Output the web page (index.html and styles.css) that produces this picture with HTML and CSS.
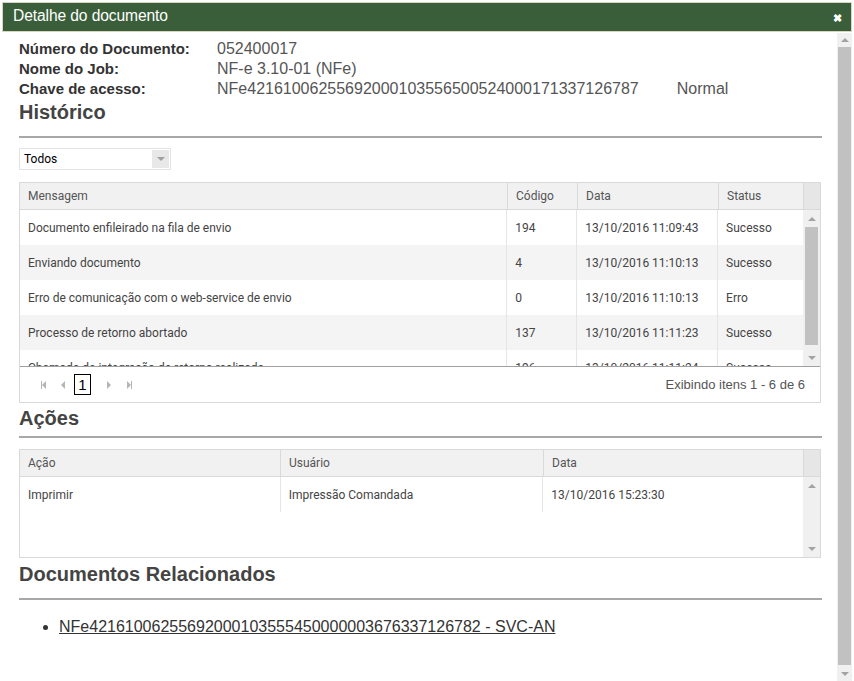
FILE: index.html
```html
<!DOCTYPE html>
<html lang="pt-BR">
<head>
    <meta charset="UTF-8">
    <title>Detalhe do documento</title>
    <link rel="stylesheet" href="styles.css">
</head>
<body>
    <div class="window">
        <div class="titlebar">
            <span class="title">Detalhe do documento</span>
            <span class="close">&#10006;</span>
        </div>
        <div class="window-body">
            <div class="content">
                <table class="info">
                    <tr><td class="label">Número do Documento:</td><td class="value">052400017</td><td></td></tr>
                    <tr><td class="label">Nome do Job:</td><td class="value">NF-e 3.10-01 (NFe)</td><td></td></tr>
                    <tr><td class="label">Chave de acesso:</td><td class="value">NFe42161006255692000103556500524000171337126787</td><td class="value extra">Normal</td></tr>
                </table>

                <h2 class="section first">Histórico</h2>
                <div class="dropdown">
                    <span class="dropdown-text">Todos</span>
                    <span class="dropdown-btn"><span class="arrow-down"></span></span>
                </div>

                <div class="grid hist">
                    <div class="grid-head">
                        <div class="hc c-msg">Mensagem</div>
                        <div class="hc c-cod">Código</div>
                        <div class="hc c-data">Data</div>
                        <div class="hc c-status">Status</div>
                        <div class="hc c-sb"></div>
                    </div>
                    <div class="grid-content">
                        <div class="rows">
                            <div class="row"><div class="c-msg">Documento enfileirado na fila de envio</div><div class="c-cod">194</div><div class="c-data">13/10/2016 11:09:43</div><div class="c-status">Sucesso</div></div>
                            <div class="row alt"><div class="c-msg">Enviando documento</div><div class="c-cod">4</div><div class="c-data">13/10/2016 11:10:13</div><div class="c-status">Sucesso</div></div>
                            <div class="row"><div class="c-msg">Erro de comunicação com o web-service de envio</div><div class="c-cod">0</div><div class="c-data">13/10/2016 11:10:13</div><div class="c-status">Erro</div></div>
                            <div class="row alt"><div class="c-msg">Processo de retorno abortado</div><div class="c-cod">137</div><div class="c-data">13/10/2016 11:11:23</div><div class="c-status">Sucesso</div></div>
                            <div class="row"><div class="c-msg">Chamada de integração de retorno realizada</div><div class="c-cod">196</div><div class="c-data">13/10/2016 11:11:24</div><div class="c-status">Sucesso</div></div>
                        </div>
                        <div class="vscroll">
                            <span class="sb-up"></span>
                            <span class="sb-thumb"></span>
                            <span class="sb-down"></span>
                        </div>
                    </div>
                    <div class="pager">
                        <span class="pg first"><span class="bar"></span><span class="tri-left"></span></span>
                        <span class="pg"><span class="tri-left"></span></span>
                        <span class="pg-num">1</span>
                        <span class="pg"><span class="tri-right"></span></span>
                        <span class="pg last"><span class="tri-right"></span><span class="bar"></span></span>
                        <span class="pg-info">Exibindo itens 1 - 6 de 6</span>
                    </div>
                </div>

                <h2 class="section short">Ações</h2>
                <div class="grid acts">
                    <div class="grid-head">
                        <div class="hc a-acao">Ação</div>
                        <div class="hc a-user">Usuário</div>
                        <div class="hc a-data">Data</div>
                        <div class="hc c-sb"></div>
                    </div>
                    <div class="grid-content">
                        <div class="rows">
                            <div class="row"><div class="a-acao">Imprimir</div><div class="a-user">Impressão Comandada</div><div class="a-data">13/10/2016 15:23:30</div></div>
                        </div>
                        <div class="vscroll empty">
                            <span class="sb-up"></span>
                            <span class="sb-down"></span>
                        </div>
                    </div>
                </div>

                <h2 class="section">Documentos Relacionados</h2>
                <ul class="related">
                    <li><a href="#">NFe42161006255692000103555450000003676337126782 - SVC-AN</a></li>
                </ul>
            </div>
            <div class="page-scroll">
                <span class="sb-up"></span>
                <span class="sb-thumb"></span>
                <span class="sb-down"></span>
            </div>
        </div>
    </div>
</body>
</html>
```

FILE: styles.css
```css
body {
    margin: 0;
    font-family: "Liberation Sans", Arial, sans-serif;
    background-color: #fff;
    color: #333;
}
.window {
    width: 852px;
    height: 681px;
    padding: 2px 0 0 2px;
    box-sizing: border-box;
    display: flex;
    flex-direction: column;
}
.titlebar {
    height: 30px;
    background-color: #3a5e39;
    border: 1px solid #d8d5c2;
    box-sizing: border-box;
    display: flex;
    align-items: center;
    justify-content: space-between;
    padding: 0 9px 0 10px;
    color: #fff;
}
.title {
    font-size: 15.6px;
    letter-spacing: -0.1px;
    padding-bottom: 2px;
}
.close {
    font-size: 11px;
    font-weight: bold;
    margin-top: 2px;
}
.window-body {
    flex: 1;
    display: flex;
    min-height: 0;
}
.content {
    flex: 1;
    padding: 7px 15px 0 17px;
}
.page-scroll {
    width: 15px;
    background-color: #f0f0f0;
    display: flex;
    flex-direction: column;
    align-items: center;
    margin-top: 1px;
}
.page-scroll .sb-thumb {
    width: 13px;
    flex: 1;
    background-color: #c1c1c1;
    margin: 0 0 2px 0;
}
.sb-up, .sb-down {
    height: 14px;
    width: 100%;
    display: flex;
    align-items: center;
    justify-content: center;
}
.sb-up::before {
    content: "";
    border-left: 4px solid transparent;
    border-right: 4px solid transparent;
    border-bottom: 4px solid #a3a3a3;
}
.sb-down::before {
    content: "";
    border-left: 4px solid transparent;
    border-right: 4px solid transparent;
    border-top: 4px solid #a3a3a3;
}

/* cabecalho */
.info {
    border-collapse: collapse;
}
.info td {
    padding: 0;
    height: 20px;
    line-height: 20px;
}
.label {
    font-size: 15px;
    font-weight: bold;
    color: #333;
    width: 198px;
}
.value {
    font-size: 16px;
    color: #555;
}
.extra {
    padding-left: 38px !important;
}
.section {
    font-size: 20px;
    font-weight: bold;
    color: #444;
    margin: 0 0 12px 0;
    padding-bottom: 13px;
    line-height: 22px;
    border-bottom: 2px solid #a8a8a8;
}
.section.first {
    margin-top: 2px;
    margin-bottom: 10px;
}
.section.short {
    padding-bottom: 7px;
    margin-bottom: 11px;
}

/* combo */
.dropdown {
    width: 150px;
    height: 20px;
    border: 1px solid #e3e3e3;
    display: flex;
    align-items: center;
    font-family: Roboto, "DejaVu Sans", sans-serif;
    font-size: 12px;
    color: #000;
    margin-bottom: 12px;
}
.dropdown-text {
    flex: 1;
    padding-left: 4px;
}
.dropdown-btn {
    width: 17px;
    height: 18px;
    background-color: #e8e8e8;
    display: flex;
    align-items: center;
    justify-content: center;
    margin-right: 1px;
}
.arrow-down {
    border-left: 4px solid transparent;
    border-right: 4px solid transparent;
    border-top: 4px solid #a0a0a0;
}

/* grids */
.grid {
    width: 802px;
    border: 1px solid #d9d9d9;
    box-sizing: border-box;
    font-family: Roboto, "DejaVu Sans", sans-serif;
    font-size: 12px;
    color: #444;
    margin-bottom: 4px;
}
.grid.acts {
    margin-bottom: 5px;
}
.grid-head {
    display: flex;
    height: 27px;
    background-color: #f1f1f1;
    border-bottom: 1px solid #d9d9d9;
    box-sizing: border-box;
}
.hc {
    line-height: 26px;
    color: #555;
    border-right: 1px solid #d9d9d9;
    box-sizing: border-box;
}
.hc.c-sb {
    border-right: none;
    background-color: #e6e6e6;
    flex: 1;
}
.grid-content {
    display: flex;
}
.rows {
    width: 783px;
    overflow: hidden;
}
.row {
    display: flex;
    height: 35px;
    align-items: center;
}
.row > div {
    height: 100%;
    display: flex;
    align-items: center;
    border-right: 1px solid #e5e5e5;
    box-sizing: border-box;
}
.row.alt {
    background-color: #f4f4f4;
}
.c-msg { width: 488px; padding-left: 8px; }
.c-cod { width: 70px; padding-left: 8px; }
.c-data { width: 141px; padding-left: 8px; }
.c-status { width: 85px; padding-left: 8px; }
.row > .c-status { border-right: none; }
.a-acao { width: 261px; padding-left: 8px; }
.a-user { width: 263px; padding-left: 8px; }
.a-data { width: 260px; padding-left: 8px; }
.row > .a-data { border-right: none; }
.hist .rows {
    height: 156px;
}
.acts .rows {
    height: 80px;
}
.vscroll {
    width: 17px;
    background-color: #f0f0f0;
    display: flex;
    flex-direction: column;
    align-items: center;
}
.vscroll .sb-up, .vscroll .sb-down {
    height: 17px;
}
.vscroll .sb-thumb {
    width: 13px;
    flex: 1;
    background-color: #c1c1c1;
    margin: 0 0 4px 0;
}
.vscroll.empty {
    justify-content: space-between;
}

/* pager */
.pager {
    height: 35px;
    border-top: 1px solid #a0a0a0;
    display: flex;
    align-items: center;
    padding-left: 13px;
}
.pg {
    width: 20px;
    display: flex;
    align-items: center;
    justify-content: center;
    height: 10px;
}
.bar {
    width: 1px;
    height: 8px;
    background-color: #b5b5b5;
}
.tri-left {
    border-top: 4px solid transparent;
    border-bottom: 4px solid transparent;
    border-right: 4px solid #b5b5b5;
}
.tri-right {
    border-top: 4px solid transparent;
    border-bottom: 4px solid transparent;
    border-left: 4px solid #b5b5b5;
}
.pg-num {
    width: 15px;
    height: 19px;
    border: 1px solid #000;
    font-family: "Liberation Sans", Arial, sans-serif;
    font-size: 15px;
    color: #000;
    text-align: center;
    line-height: 20px;
    margin: 0 8px 0 1px;
}
.pg-info {
    margin-left: auto;
    padding-right: 15px;
    font-family: "Liberation Sans", Arial, sans-serif;
    font-size: 13px;
    color: #555;
}

/* documentos relacionados */
.related {
    margin: 18px 0 0 0;
    padding-left: 40px;
    font-size: 16px;
}
.related a {
    color: #333;
}
```
